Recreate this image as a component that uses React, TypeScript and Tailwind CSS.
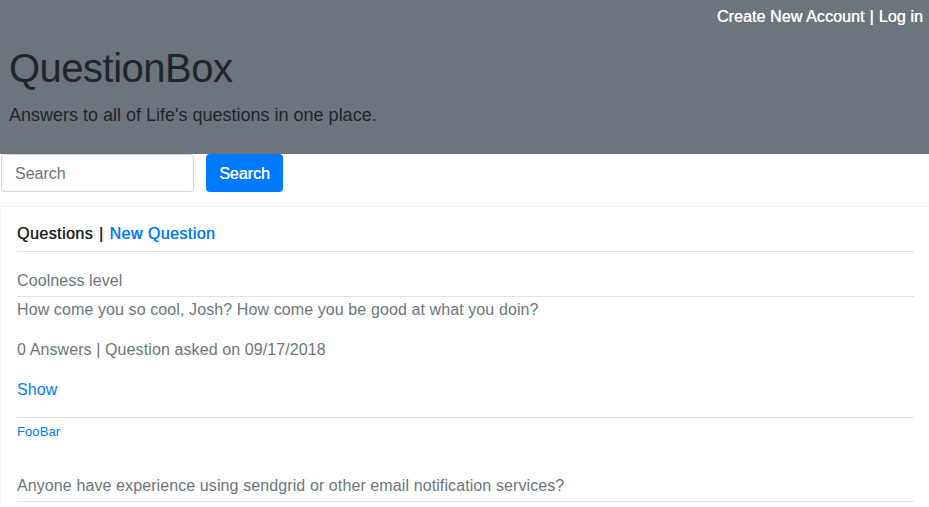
export default function App() {
  const questions = [
    {
      title: 'Coolness level',
      body: 'How come you so cool, Josh? How come you be good at what you doin?',
      meta: '0 Answers | Question asked on 09/17/2018',
      author: 'FooBar',
    },
  ];

  return (
    <div className="min-h-[507px] bg-white font-['Liberation_Sans',Arial,sans-serif] text-[#212529]">
      {/* Jumbotron header */}
      <div className="h-[154px] bg-[#6c757d] pl-[9px] pr-[6px] pt-[7px]">
        <div className="flex justify-end text-[16px] leading-[20px] tracking-[0.1px] text-white [text-shadow:0.3px_0_0_#fff]">
          <a href="#" className="hover:underline">Create New Account</a>
          <span className="mx-[5px]">|</span>
          <a href="#" className="hover:underline">Log in</a>
        </div>
        <h1 className="mt-[17px] text-[40px] font-light leading-[48px] tracking-[-0.5px] text-[#212529]">QuestionBox</h1>
        <p className="mt-[11px] text-[18px] font-light leading-[24px] text-[#212529]">
          Answers to all of Life's questions in one place.
        </p>
      </div>

      {/* Search */}
      <form className="flex items-center gap-[12px] pl-[1px]" onSubmit={e => e.preventDefault()}>
        <input
          type="text"
          placeholder="Search"
          className="h-[38px] w-[193px] rounded-[4px] border border-[#ced4da] px-[13px] pt-[1px] text-[16px] text-[#495057] placeholder:text-[#6c757d] focus:outline-none"
        />
        <button className="h-[38px] w-[77px] rounded-[4px] bg-[#007bff] pt-[1px] text-[16px] text-white [text-shadow:0.3px_0_0_#fff]">Search</button>
      </form>

      {/* Questions card */}
      <div className="mt-[14px] border-l border-t border-[#f3f3f3] pl-[16px] pr-[15px] pt-[15px]">
        <div className="border-b border-[#dee2e6] pb-[5px] text-[16px] leading-[24px] tracking-[0.45px] [text-shadow:0.3px_0_0_#212529]">
          Questions <span className="mx-[1px]">|</span>{' '}
          <a href="#" className="text-[#007bff] [text-shadow:0.3px_0_0_#007bff]">New Question</a>
        </div>

        {questions.map(q => (
          <div key={q.title} className="text-[16px] leading-[24px] tracking-[0.1px] text-[#6c757d]">
            <div className="border-b border-[#dee2e6] pb-[3px] pt-[17px]">{q.title}</div>
            <p className="pt-[1px]">{q.body}</p>
            <p className="mt-[16px]">{q.meta}</p>
            <p className="mt-[16px]">
              <a href="#" className="text-[#007bff]">Show</a>
            </p>
            <div className="mt-[15px] border-t border-[#dee2e6] pt-[4px] text-[13px] leading-[19px]">
              <a href="#" className="text-[#007bff]">{q.author}</a>
            </div>
          </div>
        ))}

        <div className="mt-[33px] border-b border-[#dee2e6] pb-[3px] text-[16px] leading-[24px] tracking-[0.1px] text-[#6c757d]">
          Anyone have experience using sendgrid or other email notification services?
        </div>
      </div>
    </div>
  );
}
